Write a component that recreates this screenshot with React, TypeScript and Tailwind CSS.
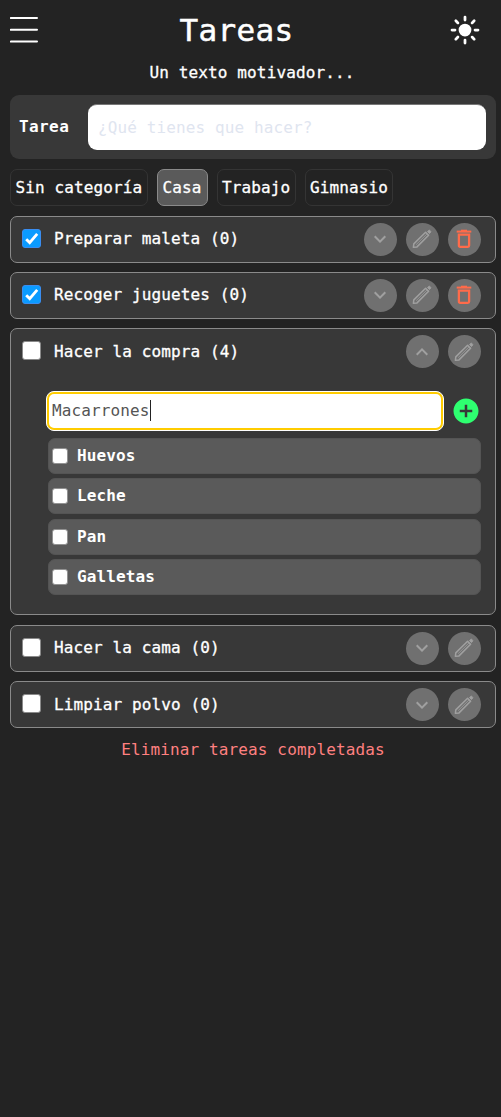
import type { ReactNode } from "react";
import { IoSunny } from "react-icons/io5";
import { MdAddCircle, MdExpandLess, MdExpandMore } from "react-icons/md";

type Task = {
  name: string;
  done?: boolean;
  open?: boolean;
  subtasks: string[];
};

const categories = ["Sin categoría", "Casa", "Trabajo", "Gimnasio"];

const tasks: Task[] = [
  { name: "Preparar maleta", done: true, subtasks: [] },
  { name: "Recoger juguetes", done: true, subtasks: [] },
  { name: "Hacer la compra", open: true, subtasks: ["Huevos", "Leche", "Pan", "Galletas"] },
  { name: "Hacer la cama", subtasks: [] },
  { name: "Limpiar polvo", subtasks: [] },
];

function RoundButton({ children, label }: { children: ReactNode; label: string }) {
  return (
    <button
      aria-label={label}
      className="flex size-[33px] shrink-0 items-center justify-center rounded-full bg-[#707070] text-[#a0a0a0]"
    >
      {children}
    </button>
  );
}

function PencilIcon() {
  return (
    <svg viewBox="0 0 20 20" className="size-5" fill="none" stroke="currentColor" strokeWidth="1.5" strokeLinejoin="round">
      <path d="M1.4 18.3 1.8 14.9 13.6 3.3 16.6 6.3 5 17.9Z" />
      <path d="M4.2 15.6 15 4.9" strokeWidth="0.8" />
      <path d="M15.6 2.5 16.7 1.4Q17.3.9 18 1.5L18.6 2.2Q19.1 2.9 18.5 3.5L17.5 4.5Z" fill="currentColor" strokeWidth="1" />
    </svg>
  );
}

function TrashIcon() {
  return (
    <svg viewBox="0 0 16 20" className="h-5 w-4" fill="none" stroke="#ff6b4a" strokeWidth="2.3">
      <path d="M.7 2.6H15.3" strokeWidth="2" />
      <path d="M5 1.4H11" strokeWidth="1.4" />
      <path d="M2.9 5.6H13.1V16.6Q13.1 17.8 11.9 17.8H4.1Q2.9 17.8 2.9 16.6Z" />
    </svg>
  );
}

function CheckBox({ checked }: { checked?: boolean }) {
  return (
    <span
      className={
        checked
          ? "mb-[2px] flex size-[19px] shrink-0 items-center justify-center rounded-[3px] border border-[#3b8df0] bg-[#0a9bff]"
          : "mb-[2px] size-[19px] shrink-0 rounded-[3px] border border-[#8a8a8a] bg-white"
      }
    >
      {checked && (
        <svg viewBox="0 0 17 17" className="size-[17px]" fill="none" stroke="white" strokeWidth="2.8">
          <path d="M3.2 9.2 6.7 12.6 14.2 3.8" />
        </svg>
      )}
    </span>
  );
}

function TaskCard({ task }: { task: Task }) {
  return (
    <li className="rounded-[7px] border border-[#8a8a8a] bg-[#383838] pr-[14.5px] pl-[11px]">
      <div className="flex h-[45px] items-center gap-[9px]">
        <CheckBox checked={task.done} />
        <span className="flex-1 pl-[4px] [-webkit-text-stroke:0.3px_white]">
          {task.name} ({task.subtasks.length})
        </span>
        <RoundButton label="Desplegar">
          {task.open ? <MdExpandLess size={24} /> : <MdExpandMore size={24} />}
        </RoundButton>
        <RoundButton label="Editar">
          <PencilIcon />
        </RoundButton>
        {task.done && (
          <RoundButton label="Eliminar">
            <TrashIcon />
          </RoundButton>
        )}
      </div>
      {task.open && (
        <div className="pt-[16.5px] pb-[19px] pl-[26px]">
          <div className="flex items-center gap-[7px]">
            <div className="-ml-[2px] flex h-[40px] w-[398px] items-center rounded-[8px] border border-white bg-white">
              <div className="flex h-[38px] flex-1 items-center rounded-[7px] border-2 border-[#ffcc00] pl-[3px] text-[#555]">
                Macarrones
                <span className="h-[21px] w-[1.5px] bg-[#222]" />
              </div>
            </div>
            <MdAddCircle size={30} className="shrink-0 text-[#2eff70]" />
          </div>
          <ul className="mt-[7px] flex flex-col gap-[4.5px]">
            {task.subtasks.map((name) => (
              <li
                key={name}
                className="flex h-[36px] items-center gap-[9px] rounded-[7px] border border-[#545454] bg-[#5a5a5a] pl-[3px] font-bold"
              >
                <span className="size-4 rounded-[3px] border border-[#929292] bg-white" />
                {name}
              </li>
            ))}
          </ul>
        </div>
      )}
    </li>
  );
}

export default function App() {
  return (
    <div className="min-h-[1117px] w-[501px] bg-[#232323] pr-[5px] pl-[10px] font-['DejaVu_Sans_Mono',monospace] text-[16px] leading-6 tracking-[0.12px] text-white">
      <header className="flex h-[59px] items-center justify-between pr-[15px]">
        <svg viewBox="0 0 28 28" className="size-7 shrink-0" stroke="white" strokeWidth="2" strokeLinecap="round">
          <path d="M.8 2H27M.8 13.8H27M.8 25.6H27" />
        </svg>
        <h1 className="pr-[14px] text-[31px] leading-10 tracking-[0.3px] [-webkit-text-stroke:0.5px_white]">Tareas</h1>
        <IoSunny size={32} className="shrink-0" />
      </header>
      <p className="pt-[2px] pr-[2px] text-center [-webkit-text-stroke:0.3px_white]">Un texto motivador...</p>

      <div className="mt-[10px] flex h-[64px] items-center gap-[18px] rounded-[9px] bg-[#383838] pr-[10px] pl-[9px]">
        <label className="w-[51px] shrink-0 font-bold tracking-[0.4px]">Tarea</label>
        <div className="flex h-[46px] flex-1 items-center rounded-[9px] border-t border-[#777] bg-white pl-[10px] text-[#dfe5f0]">
          ¿Qué tienes que hacer?
        </div>
      </div>

      <nav className="mt-[10px] flex gap-[9px]">
        {categories.map((name) => (
          <button
            key={name}
            className={
              name === "Casa"
                ? "h-[37px] rounded-[7px] border border-[#8a8a8a] bg-[#5a5a5a] px-[5px] [-webkit-text-stroke:0.3px_white]"
                : "h-[37px] rounded-[7px] border border-[#343434] px-[4.4px] [-webkit-text-stroke:0.3px_white]"
            }
          >
            {name}
          </button>
        ))}
      </nav>

      <ul className="mt-[9.6px] flex flex-col gap-[9.4px]">
        {tasks.map((task) => (
          <TaskCard key={task.name} task={task} />
        ))}
      </ul>

      <button className="mt-[10px] block w-full text-center text-[#ff8080]">Eliminar tareas completadas</button>
    </div>
  );
}
